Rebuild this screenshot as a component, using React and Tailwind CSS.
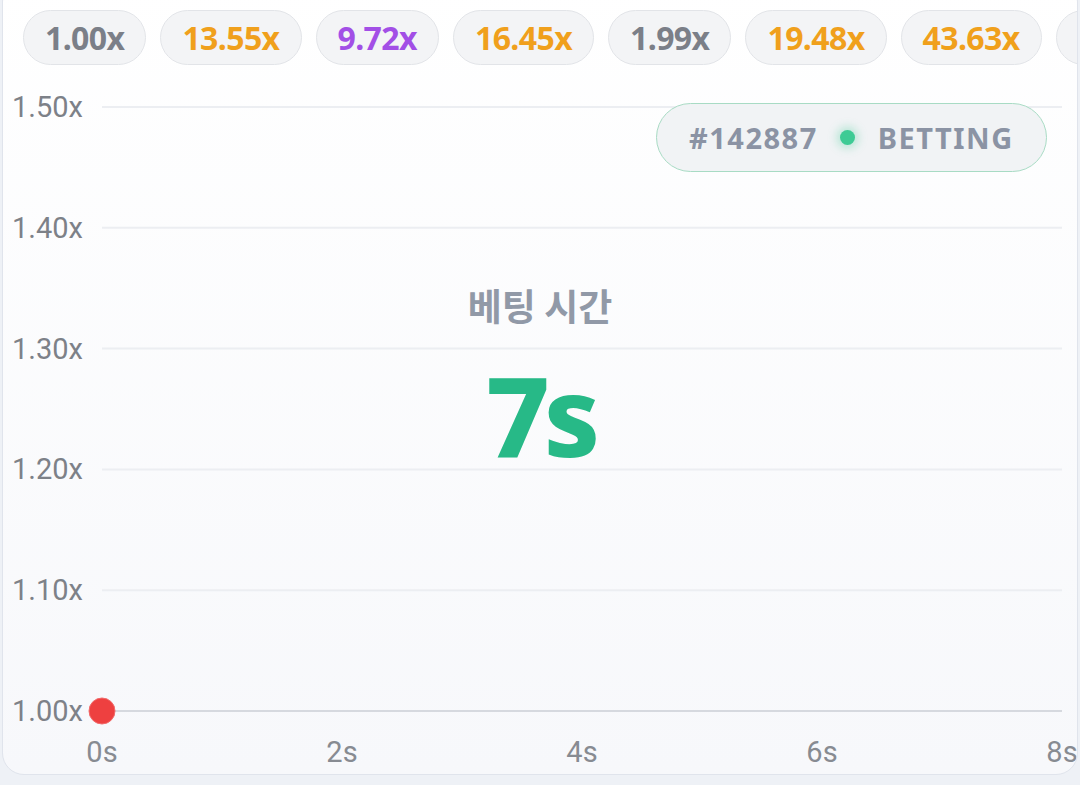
import React from 'react'

const HISTORY = [
  { v: '1.00x', c: 'text-[#7b7f88]' },
  { v: '13.55x', c: 'text-[#f0a01c]' },
  { v: '9.72x', c: 'text-[#a24fe6]' },
  { v: '16.45x', c: 'text-[#f0a01c]' },
  { v: '1.99x', c: 'text-[#7b7f88]' },
  { v: '19.48x', c: 'text-[#f0a01c]' },
  { v: '43.63x', c: 'text-[#f0a01c]' },
  { v: '2.10x', c: 'text-[#7b7f88]' },
]

const Y_TICKS = ['1.50x', '1.40x', '1.30x', '1.20x', '1.10x', '1.00x']
const X_TICKS = ['0s', '2s', '4s', '6s', '8s']

// chart geometry (svg coords)
const X0 = 99
const X1 = 1059
const Y_TOP = 27
const Y_STEP = 120.8

function Chart() {
  return (
    <svg width="1074" height="694" className="block" style={{ fontFamily: 'Roboto, "Liberation Sans", sans-serif' }}>
      {Y_TICKS.map((t, i) => {
        const y = Y_TOP + i * Y_STEP
        const base = i === Y_TICKS.length - 1
        return (
          <g key={t}>
            <line x1={X0} x2={X1} y1={y} y2={y} stroke={base ? '#d6d9df' : '#eceef2'} strokeWidth="2" />
            <text x="80" y={y} textAnchor="end" dominantBaseline="central" fontSize="29" fill="#7d8188">{t}</text>
          </g>
        )
      })}
      {X_TICKS.map((t, i) => (
        <text key={t} x={X0 + i * 240} y="672" textAnchor="middle" dominantBaseline="central" fontSize="29" fill="#878b92">{t}</text>
      ))}
      <circle cx={X0} cy={Y_TOP + 5 * Y_STEP} r="13" fill="#ee4040" stroke="#f26a6a" strokeWidth="1" />
    </svg>
  )
}

export default function App() {
  return (
    <div className="h-[785px] w-[1080px] overflow-hidden bg-[#eef1f6]">
      <div className="mx-[2px] mt-[-20px] h-[795px] rounded-[22px] border border-[#e0e4ec] bg-gradient-to-b from-white to-[#f7f8fb] overflow-hidden flex flex-col">
        {/* ── recent multipliers ───────────────────── */}
        <div className="flex gap-[14px] pl-[20px] pt-[29px] whitespace-nowrap overflow-hidden" style={{ fontFamily: '"Noto Sans", "Open Sans", sans-serif' }}>
          {HISTORY.map((h, i) => (
            <div
              key={i}
              className={`h-[55px] flex-shrink-0 flex items-center px-[21px] rounded-full border-[1.5px] border-[#e2e4e8] bg-[#f3f4f6] text-[32px] font-bold tracking-[-0.6px] ${h.c}`}
            >
              {h.v}
            </div>
          ))}
        </div>

        {/* ── chart ───────────────────── */}
        <div className="relative mt-[15px] flex-1">
          <Chart />

          {/* round badge */}
          <div
            className="absolute top-[23px] right-[30px] h-[69px] w-[391px] flex items-center pl-[32px] rounded-full border-[1.5px] border-[#a8dbc4] bg-[#f1f3f5] text-[29px] font-bold tracking-[1.5px] text-[#8b93a4]"
            style={{ fontFamily: '"Noto Sans", "Open Sans", sans-serif' }}
          >
            <span>#142887</span>
            <span className="ml-[22px] mr-[23px] h-[15px] w-[15px] rounded-full bg-[#3ecb95] shadow-[0_0_10px_3px_rgba(62,203,149,0.35)]" />
            <span>BETTING</span>
          </div>

          {/* countdown */}
          <div className="absolute left-0 right-0 top-[198px] flex flex-col items-center">
            <span
              className="text-[37px] font-bold leading-[54px] text-[#9199a7]"
              style={{ fontFamily: '"Noto Sans CJK KR", "Noto Sans", sans-serif' }}
            >
              베팅 시간
            </span>
            <span
              className="mt-[20px] text-[111px] font-extrabold leading-[124px] text-[#27b987] tracking-[-6px]"
              style={{ fontFamily: '"Noto Sans", "Open Sans", sans-serif' }}
            >
              7s
            </span>
          </div>
        </div>
      </div>
    </div>
  )
}
